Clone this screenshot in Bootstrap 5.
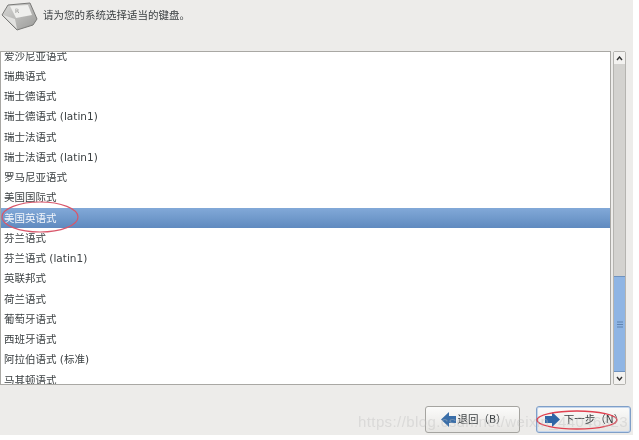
<!DOCTYPE html>
<html lang="zh">
<head>
    <meta charset="UTF-8">
    <title>键盘</title>
    <link rel="stylesheet" href="https://cdn.jsdelivr.net/npm/bootstrap@5.3.0/dist/css/bootstrap.min.css">
    <style>
        html, body { background: #fff; height: 440px; overflow: hidden; }
        body { font-family: "DejaVu Sans", "Noto Sans CJK SC", sans-serif; font-size: 10.5px; color: #3a3f41; }
        .installer { width: 633px; height: 435px; background: #edecea; position: relative; overflow: hidden; filter: blur(.35px); }
        .top-bar { height: 51px; padding-left: 1px; padding-bottom: 19px; }
        .top-text { margin-left: 5px; }
        .list-row { height: 334px; }
        .key-list { width: 611px; height: 334px; overflow: hidden; background: #fff; border: 1px solid #a9a8a4; }
        .key-items { margin-top: -6.5px; }
        .key-item { height: 20.27px; line-height: 20.27px; padding-left: 3px; white-space: nowrap; }
        .key-item.picked { color: #f4f7fb; background: linear-gradient(#82a9d8, #5f8abf); }
        .scroll-col { width: 13px; height: 334px; margin-left: 2px; background: #d3d2cf; border: 1px solid #b5b4b0; border-radius: 2px; }
        .scroll-btn { height: 12px; background: #f3f2f0; }
        .scroll-thumb { height: 96px; background: #8fb5e4; border-top: 1px solid #6f93c0; border-bottom: 1px solid #6f93c0; }
        .bottom-bar { height: 50px; padding-top: 21px; padding-right: 2px; }
        .act-btn { height: 27px; font-size: 10.5px; color: #3a3f41; background: linear-gradient(#fbfbfa, #e6e5e2); border: 1px solid #a5a4a0; border-radius: 3px; padding: 0; }
        .back-btn { width: 95px; margin-right: 16px; gap: 1px; padding-left: 3px; }
        .next-btn { width: 95px; gap: 4px; padding-left: 2px; border-color: #7f9fc8; box-shadow: inset 0 0 0 1px #c3d5ec; }
        .mark-ring { position: absolute; left: 0; top: 0; pointer-events: none; }
        .water-mark { position: absolute; left: 358px; top: 413px; font-family: "Liberation Sans", sans-serif; font-size: 15px; line-height: 17px; color: rgba(190,190,190,.4); white-space: nowrap; letter-spacing: .4px; }
    </style>
</head>
<body>
    <div class="installer">
        <div class="top-bar d-flex align-items-center">
            <svg width="37" height="29" viewBox="0 0 37 29">
                <defs>
                    <linearGradient id="capFront" x1="0" y1="0" x2="1" y2="1"><stop offset="0" stop-color="#d8d8d6"/><stop offset="1" stop-color="#9a9a98"/></linearGradient>
                </defs>
                <path d="M1 13 7 3 29 1 36 17 32 23 16 28Z" fill="url(#capFront)" stroke="#7a7a78" stroke-linejoin="round"/>
                <path d="M9 4 27 3 31 13 15 16Z" fill="#efefed"/>
                <path d="M2 13 14 17 16 27Z" fill="#e2e2e0"/>
                <text x="14" y="11" font-size="6" fill="#8a8a88">R</text>
            </svg>
            <span class="top-text">请为您的系统选择适当的键盘。</span>
        </div>

        <div class="list-row d-flex">
            <div class="key-list">
                <div class="key-items">
                    <div class="key-item">爱沙尼亚语式</div>
                    <div class="key-item">瑞典语式</div>
                    <div class="key-item">瑞士德语式</div>
                    <div class="key-item">瑞士德语式 (latin1)</div>
                    <div class="key-item">瑞士法语式</div>
                    <div class="key-item">瑞士法语式 (latin1)</div>
                    <div class="key-item">罗马尼亚语式</div>
                    <div class="key-item">美国国际式</div>
                    <div class="key-item picked">美国英语式</div>
                    <div class="key-item">芬兰语式</div>
                    <div class="key-item">芬兰语式 (latin1)</div>
                    <div class="key-item">英联邦式</div>
                    <div class="key-item">荷兰语式</div>
                    <div class="key-item">葡萄牙语式</div>
                    <div class="key-item">西班牙语式</div>
                    <div class="key-item">阿拉伯语式 (标准)</div>
                    <div class="key-item">马其顿语式</div>
                </div>
            </div>
            <div class="scroll-col d-flex flex-column">
                <div class="scroll-btn d-flex align-items-center justify-content-center">
                    <svg width="7" height="5" viewBox="0 0 7 5"><path d="M1 4 3.5 1 6 4" fill="none" stroke="#333" stroke-width="1.4"/></svg>
                </div>
                <div class="flex-grow-1"></div>
                <div class="scroll-thumb d-flex flex-column align-items-center justify-content-center">
                    <svg width="6" height="7" viewBox="0 0 6 7"><path d="M0 1H6M0 3.5H6M0 6H6" stroke="#5f83b0"/></svg>
                </div>
                <div class="scroll-btn d-flex align-items-center justify-content-center">
                    <svg width="7" height="5" viewBox="0 0 7 5"><path d="M1 1 3.5 4 6 1" fill="none" stroke="#333" stroke-width="1.4"/></svg>
                </div>
            </div>
        </div>

        <div class="bottom-bar d-flex justify-content-end">
            <button class="btn act-btn back-btn d-flex align-items-center justify-content-center">
                <svg width="15" height="15" viewBox="0 0 15 15"><path d="M0 7.5 8 0V4H15V11H8V15Z" fill="#3a6ea8"/></svg>
                <span>退回（B）</span>
            </button>
            <button class="btn act-btn next-btn d-flex align-items-center justify-content-center">
                <svg width="15" height="15" viewBox="0 0 15 15"><path d="M15 7.5 7 0V4H0V11H7V15Z" fill="#2f66a6"/></svg>
                <span>下一步（N）</span>
            </button>
        </div>

        <svg class="mark-ring" width="633" height="435" viewBox="0 0 633 435">
            <ellipse cx="40" cy="217" rx="38" ry="15" fill="none" stroke="#d9566a" stroke-width="1.2"/>
            <ellipse cx="577" cy="420" rx="40" ry="9" fill="none" stroke="#e0404f" stroke-width="1.4"/>
        </svg>
        <div class="water-mark">https://blog.csdn.net/weixin_44046323</div>
    </div>

    <script src="https://cdn.jsdelivr.net/npm/bootstrap@5.3.0/dist/js/bootstrap.bundle.min.js"></script>
</body>
</html>
